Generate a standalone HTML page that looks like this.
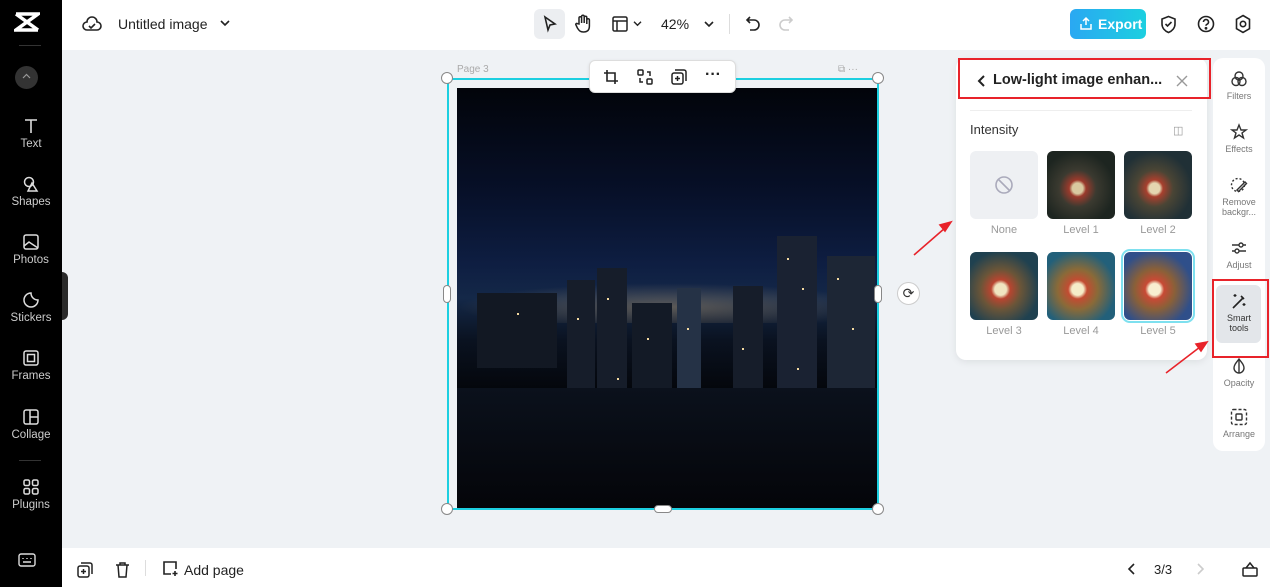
<!DOCTYPE html>
<html><head><meta charset="utf-8"><style>
*{margin:0;padding:0;box-sizing:border-box}
body{width:1270px;height:587px;overflow:hidden;font-family:"Liberation Sans",sans-serif;background:#eff2f5;position:relative}
.abs{position:absolute}
.side{left:0;top:0;width:62px;height:587px;background:#000;color:#ddd}
.si{position:absolute;left:0;width:62px;text-align:center;font-size:11.5px;color:#ccc}
.si svg{display:block;margin:0 auto 3px}
.top{left:62px;top:0;width:1208px;height:50px;background:#fff}
.bot{left:62px;top:548px;width:1208px;height:39px;background:#fff}
.lbl{font-size:11px;color:#999;text-align:center;position:absolute;width:68px}
.th{position:absolute;width:68px;height:68px;border-radius:6px;overflow:hidden}
.rr{font-size:9px;color:#777;text-align:center;position:absolute;left:1213px;width:52px;line-height:10px}
.rr svg{display:block;margin:0 auto 3px}
.b{position:absolute;background:#161d2a}
.w{position:absolute;width:2px;height:2px;background:#f3d9a0}
</style></head><body>
<div class="abs side">
 <svg class="abs" style="left:14px;top:12px" width="26" height="20" viewBox="0 0 26 20"><path d="M2 2h22L2 18h22M2 2l22 16" stroke="#fff" stroke-width="3.5" fill="none"/></svg>
 <div class="abs" style="left:19px;top:45px;width:22px;height:1px;background:#333"></div>
 <div class="abs" style="left:15px;top:66px;width:23px;height:23px;border-radius:50%;background:#333"></div>
 <svg class="abs" style="left:22px;top:73px" width="9" height="6" viewBox="0 0 9 6"><path d="M1 5l3.5-3.5L8 5" stroke="#999" stroke-width="1.2" fill="none"/></svg>
 <div class="si" style="top:117px"><svg width="18" height="18" viewBox="0 0 18 18"><path d="M3 3h12M9 3v13" stroke="#ddd" stroke-width="1.6" fill="none"/></svg>Text</div>
 <div class="si" style="top:175px"><svg width="18" height="18" viewBox="0 0 18 18" fill="none" stroke="#ddd" stroke-width="1.5"><circle cx="7" cy="7" r="4.5"/><path d="M10 8l5 8H6z"/></svg>Shapes</div>
 <div class="si" style="top:233px"><svg width="18" height="18" viewBox="0 0 18 18" fill="none" stroke="#ddd" stroke-width="1.5"><rect x="2" y="2" width="14" height="14" rx="2"/><path d="M2 13l5-4 9 6"/></svg>Photos</div>
 <div class="si" style="top:291px"><svg width="18" height="18" viewBox="0 0 18 18" fill="none" stroke="#ddd" stroke-width="1.5"><path d="M9 2a7 7 0 1 0 7 7c-4 0-7-3-7-7z"/></svg>Stickers</div>
 <div class="si" style="top:349px"><svg width="18" height="18" viewBox="0 0 18 18" fill="none" stroke="#ddd" stroke-width="1.5"><rect x="2" y="2" width="14" height="14" rx="2"/><rect x="5.5" y="5.5" width="7" height="7"/></svg>Frames</div>
 <div class="si" style="top:408px"><svg width="18" height="18" viewBox="0 0 18 18" fill="none" stroke="#ddd" stroke-width="1.5"><rect x="2" y="2" width="14" height="14" rx="2"/><path d="M8 2v14M8 9h8"/></svg>Collage</div>
 <div class="abs" style="left:19px;top:460px;width:22px;height:1px;background:#333"></div>
 <div class="si" style="top:478px"><svg width="18" height="18" viewBox="0 0 18 18" fill="none" stroke="#ddd" stroke-width="1.5"><rect x="2" y="2" width="5.5" height="5.5" rx="1.5"/><rect x="10.5" y="2" width="5.5" height="5.5" rx="1.5"/><rect x="2" y="10.5" width="5.5" height="5.5" rx="1.5"/><rect x="10.5" y="10.5" width="5.5" height="5.5" rx="1.5"/></svg>Plugins</div>
 <svg class="abs" style="left:18px;top:553px" width="18" height="14" viewBox="0 0 18 14" fill="none" stroke="#ddd" stroke-width="1.4"><rect x="1" y="1" width="16" height="12" rx="2"/><path d="M5 5v1M9 5v1M13 5v1M5 9h8"/></svg>
</div>
<div class="abs" style="left:62px;top:272px;width:6px;height:48px;background:#2a2a2a;border-radius:0 6px 6px 0"></div>
<div class="abs top">
 <svg class="abs" style="left:20px;top:15px" width="20" height="18" viewBox="0 0 20 18" fill="none" stroke="#222" stroke-width="1.6"><path d="M5 15a4 4 0 0 1 0-8 5 5 0 0 1 10 0 4 4 0 0 1 0 8z"/><path d="M7 11l2 2 4-4"/></svg>
 <div class="abs" style="left:56px;top:16px;font-size:14px;color:#222">Untitled image</div>
 <svg class="abs" style="left:158px;top:19px" width="10" height="8" viewBox="0 0 10 8"><path d="M1 2l4 4 4-4" stroke="#222" stroke-width="1.6" fill="none"/></svg>
 <div class="abs" style="left:472px;top:9px;width:31px;height:30px;background:#eceef1;border-radius:6px"></div>
 <svg class="abs" style="left:480px;top:15px" width="16" height="18" viewBox="0 0 16 18"><path d="M3 2l10 7-5 1-2 5z" stroke="#222" stroke-width="1.6" fill="none"/></svg>
 <svg class="abs" style="left:512px;top:14px" width="18" height="20" viewBox="0 0 18 20" fill="none" stroke="#222" stroke-width="1.5"><path d="M5 10V4a1.3 1.3 0 0 1 2.6 0v5V2.5a1.3 1.3 0 0 1 2.6 0V9V3.5a1.3 1.3 0 0 1 2.6 0V10V6a1.3 1.3 0 0 1 2.6 0v6c0 4-2 6-6 6-3 0-4-1-6-4L2 11c-.7-1 .5-2 1.5-1.3z"/></svg>
 <svg class="abs" style="left:550px;top:16px" width="16" height="16" viewBox="0 0 16 16" fill="none" stroke="#222" stroke-width="1.5"><rect x="1" y="1" width="14" height="14" rx="1.5"/><path d="M1 5h14M5 5v10"/></svg>
 <svg class="abs" style="left:571px;top:20px" width="9" height="7" viewBox="0 0 10 8"><path d="M1 2l4 4 4-4" stroke="#222" stroke-width="1.6" fill="none"/></svg>
 <div class="abs" style="left:599px;top:16px;font-size:14px;color:#222">42%</div>
 <svg class="abs" style="left:642px;top:20px" width="10" height="8" viewBox="0 0 10 8"><path d="M1 2l4 4 4-4" stroke="#222" stroke-width="1.6" fill="none"/></svg>
 <div class="abs" style="left:667px;top:14px;width:1px;height:20px;background:#ddd"></div>
 <svg class="abs" style="left:683px;top:15px" width="16" height="17" viewBox="0 0 16 17" fill="none" stroke="#222" stroke-width="1.6"><path d="M5 2L2 5l3 3M2 5h7a5 5 0 0 1 0 10H5"/></svg>
 <svg class="abs" style="left:716px;top:15px" width="16" height="17" viewBox="0 0 16 17" fill="none" stroke="#ccc" stroke-width="1.6"><path d="M11 2l3 3-3 3M14 5H7a5 5 0 0 0 0 10h4"/></svg>
 <div class="abs" style="left:1008px;top:9px;width:76px;height:30px;border-radius:6px;background:linear-gradient(90deg,#2aa8f2,#1ccfe0);color:#fff;font-size:14px;font-weight:bold;padding:7px 0 0 28px">Export</div>
 <svg class="abs" style="left:1017px;top:16px" width="14" height="15" viewBox="0 0 14 15" fill="none" stroke="#fff" stroke-width="1.5"><path d="M7 9V2M4 5l3-3 3 3M2 8v5h10V8"/></svg>
 <svg class="abs" style="left:1098px;top:15px" width="17" height="19" viewBox="0 0 17 19" fill="none" stroke="#222" stroke-width="1.6"><path d="M8.5 1.5L15 4v5c0 4-3 7-6.5 8.5C5 16 2 13 2 9V4z"/><path d="M5.5 9l2 2 4-4"/></svg>
 <svg class="abs" style="left:1135px;top:15px" width="18" height="18" viewBox="0 0 18 18" fill="none" stroke="#222" stroke-width="1.6"><circle cx="9" cy="9" r="7.5"/><path d="M6.5 7a2.5 2.5 0 1 1 3.5 2.3c-.7.3-1 .8-1 1.5"/><circle cx="9" cy="13.3" r=".6" fill="#222"/></svg>
 <svg class="abs" style="left:1172px;top:14px" width="18" height="20" viewBox="0 0 18 20" fill="none" stroke="#222" stroke-width="1.6"><path d="M9 1.5l6.5 3.8v9.4L9 18.5l-6.5-3.8V5.3z"/><circle cx="9" cy="10" r="2.7"/></svg>
</div>
<div class="abs" style="left:457px;top:64px;font-size:10px;color:#aaa">Page 3</div>
<div class="abs" style="left:838px;top:64px;font-size:10px;color:#aaa">⧉ ···</div>
<div class="abs" style="left:457px;top:88px;width:421px;height:421px;overflow:hidden;background:linear-gradient(180deg,#02040a 0%,#071029 25%,#0e1e42 42%,#142848 50%,#0a1220 60%,#04060b 72%,#05070b 100%)">
 <div class="abs" style="left:0;top:195px;width:421px;height:40px;background:radial-gradient(ellipse at 50% 60%,rgba(230,190,130,.35),rgba(0,0,0,0) 70%)"></div>
 <div class="b" style="left:320px;top:148px;width:40px;height:185px;background:#1a2232"></div>
 <div class="b" style="left:370px;top:168px;width:48px;height:170px;background:#1d2635"></div>
 <div class="b" style="left:276px;top:198px;width:30px;height:130px"></div>
 <div class="b" style="left:220px;top:200px;width:24px;height:115px;background:#253246"></div>
 <div class="b" style="left:140px;top:180px;width:30px;height:130px"></div>
 <div class="b" style="left:110px;top:192px;width:28px;height:118px"></div>
 <div class="b" style="left:175px;top:215px;width:40px;height:90px;background:#131a26"></div>
 <div class="b" style="left:20px;top:205px;width:80px;height:75px;background:#121823"></div>
 <div class="abs" style="left:0;top:300px;width:421px;height:121px;background:linear-gradient(180deg,#0b111c,#040509)"></div>
 <div class="w" style="left:330px;top:170px"></div><div class="w" style="left:345px;top:200px"></div><div class="w" style="left:380px;top:190px"></div><div class="w" style="left:395px;top:240px"></div><div class="w" style="left:150px;top:210px"></div><div class="w" style="left:120px;top:230px"></div><div class="w" style="left:230px;top:240px"></div><div class="w" style="left:285px;top:260px"></div><div class="w" style="left:60px;top:225px"></div><div class="w" style="left:190px;top:250px"></div><div class="w" style="left:340px;top:280px"></div><div class="w" style="left:160px;top:290px"></div>
</div>
<div class="abs" style="left:447px;top:78px;width:432px;height:432px;border:2px solid #1ccfe0"></div>
<div class="abs" style="left:441px;top:72px;width:12px;height:12px;border-radius:50%;background:#fff;border:1px solid #888"></div>
<div class="abs" style="left:872px;top:72px;width:12px;height:12px;border-radius:50%;background:#fff;border:1px solid #888"></div>
<div class="abs" style="left:441px;top:503px;width:12px;height:12px;border-radius:50%;background:#fff;border:1px solid #888"></div>
<div class="abs" style="left:872px;top:503px;width:12px;height:12px;border-radius:50%;background:#fff;border:1px solid #888"></div>
<div class="abs" style="left:443px;top:285px;width:8px;height:18px;border-radius:4px;background:#fff;border:1px solid #888"></div>
<div class="abs" style="left:874px;top:285px;width:8px;height:18px;border-radius:4px;background:#fff;border:1px solid #888"></div>
<div class="abs" style="left:654px;top:505px;width:18px;height:8px;border-radius:4px;background:#fff;border:1px solid #888"></div>
<div class="abs" style="left:897px;top:282px;width:23px;height:23px;border-radius:50%;background:#fff;border:1px solid #ccc;font-size:14px;text-align:center;line-height:21px;color:#333">⟳</div>
<div class="abs" style="left:589px;top:60px;width:147px;height:33px;background:#fff;border:1px solid #ddd;border-radius:6px;box-shadow:0 1px 3px rgba(0,0,0,.1)">
 <svg class="abs" style="left:13px;top:8px" width="16" height="16" viewBox="0 0 16 16" fill="none" stroke="#222" stroke-width="1.6"><path d="M4 1v11h11M1 4h11v11"/></svg>
 <svg class="abs" style="left:47px;top:8px" width="16" height="16" viewBox="0 0 16 16" fill="none" stroke="#222" stroke-width="1.5"><rect x="1" y="1" width="5" height="5" rx="1"/><rect x="10" y="10" width="5" height="5" rx="1"/><path d="M10 3h3v4M6 13H3V9"/></svg>
 <svg class="abs" style="left:81px;top:8px" width="16" height="16" viewBox="0 0 16 16" fill="none" stroke="#222" stroke-width="1.5"><rect x="1" y="4" width="11" height="11" rx="2"/><path d="M4 1h9a2 2 0 0 1 2 2v9M6.5 7v5M4 9.5h5"/></svg>
 <div class="abs" style="left:115px;top:5px;font-size:16px;font-weight:bold;color:#222">···</div>
</div>
<div class="abs" style="left:956px;top:58px;width:251px;height:302px;background:#fff;border-radius:10px;box-shadow:0 2px 8px rgba(0,0,0,.08)">
 <div class="abs" style="left:14px;top:52px;width:222px;height:1px;background:#eee"></div>
 <div class="abs" style="left:14px;top:64px;font-size:13px;color:#333">Intensity</div>
 <div class="abs" style="left:217px;top:66px;font-size:11px;color:#999">◫</div>
</div>
<div class="abs" style="left:958px;top:58px;width:253px;height:41px;border:2.5px solid #e8232a"></div>
<svg class="abs" style="left:976px;top:74px" width="10" height="14" viewBox="0 0 10 14"><path d="M8 2L3 7l5 5" stroke="#222" stroke-width="2" fill="none"/></svg>
<div class="abs" style="left:993px;top:72px;font-size:14.5px;font-weight:bold;color:#222">Low-light image enhan...</div>
<svg class="abs" style="left:1175px;top:74px" width="14" height="14" viewBox="0 0 14 14"><path d="M2 2l10 10M12 2L2 12" stroke="#999" stroke-width="1.4"/></svg>
<div class="th" style="left:970px;top:151px;background:#eef0f3"><svg class="abs" style="left:24px;top:24px" width="20" height="20" viewBox="0 0 20 20" fill="none" stroke="#aab" stroke-width="1.6"><circle cx="10" cy="10" r="8"/><path d="M4.5 4.5l11 11"/></svg></div>
<div class="th" style="left:1047px;top:151px;background:radial-gradient(circle at 45% 55%,#d9c9a0 0 10%,#9b3a2c 16%,#3b3a30 35%,#1d2520 70%)"></div>
<div class="th" style="left:1124px;top:151px;background:radial-gradient(circle at 45% 55%,#e4d6b0 0 10%,#a8402e 16%,#4a4535 35%,#203036 70%)"></div>
<div class="th" style="left:970px;top:252px;background:radial-gradient(circle at 45% 55%,#f0e5c0 0 11%,#b84530 18%,#6a5538 38%,#1f4150 72%)"></div>
<div class="th" style="left:1047px;top:252px;background:radial-gradient(circle at 45% 55%,#f5ecc8 0 11%,#c24c32 18%,#8a6a38 38%,#22607a 72%)"></div>
<div class="th" style="left:1124px;top:252px;background:radial-gradient(circle at 45% 55%,#f8eed0 0 11%,#c84a35 18%,#8a6038 38%,#2f4f8a 72%);outline:2px solid #7ee0ef;outline-offset:1px"></div>
<div class="lbl" style="left:970px;top:224px">None</div>
<div class="lbl" style="left:1047px;top:224px">Level 1</div>
<div class="lbl" style="left:1124px;top:224px">Level 2</div>
<div class="lbl" style="left:970px;top:325px">Level 3</div>
<div class="lbl" style="left:1047px;top:325px">Level 4</div>
<div class="lbl" style="left:1124px;top:325px">Level 5</div>
<div class="abs" style="left:1213px;top:58px;width:52px;height:393px;background:#fff;border-radius:10px"></div>
<div class="abs" style="left:1216px;top:285px;width:45px;height:58px;background:#e3e6ea;border-radius:6px"></div>
<div class="abs" style="left:1212px;top:279px;width:57px;height:79px;border:2.5px solid #e8232a"></div>
<div class="rr" style="top:70px"><svg width="18" height="18" viewBox="0 0 18 18" fill="none" stroke="#333" stroke-width="1.4"><circle cx="9" cy="6" r="4"/><circle cx="6" cy="11.5" r="4"/><circle cx="12" cy="11.5" r="4"/></svg>Filters</div>
<div class="rr" style="top:123px"><svg width="18" height="18" viewBox="0 0 18 18" fill="none" stroke="#333" stroke-width="1.4"><path d="M9 2l2 5h5l-4 3 1.5 5L9 12l-4.5 3L6 10 2 7h5z"/></svg>Effects</div>
<div class="rr" style="top:176px"><svg width="18" height="18" viewBox="0 0 18 18" fill="none" stroke="#333" stroke-width="1.4"><circle cx="8" cy="9" r="6.5" stroke-dasharray="2 2"/><path d="M7 14l8-8 1.5 1.5-8 8z"/></svg>Remove<br>backgr...</div>
<div class="rr" style="top:239px"><svg width="18" height="18" viewBox="0 0 18 18" fill="none" stroke="#333" stroke-width="1.4"><path d="M2 6h14M2 12h14"/><circle cx="11" cy="6" r="2" fill="#fff"/><circle cx="7" cy="12" r="2" fill="#fff"/></svg>Adjust</div>
<div class="rr" style="top:292px;color:#333"><svg width="18" height="18" viewBox="0 0 18 18" fill="none" stroke="#222" stroke-width="1.6"><path d="M3 16L13 6M11 4l3 3"/><path d="M5 2v3M3.5 3.5h3M14 11v3M12.5 12.5h3" stroke-width="1.2"/></svg>Smart<br>tools</div>
<div class="rr" style="top:357px"><svg width="18" height="18" viewBox="0 0 18 18" fill="none" stroke="#333" stroke-width="1.4"><path d="M9 2c3 4 5 6 5 9a5 5 0 0 1-10 0c0-3 2-5 5-9z"/><path d="M9 3v13" /></svg>Opacity</div>
<div class="rr" style="top:408px"><svg width="18" height="18" viewBox="0 0 18 18" fill="none" stroke="#333" stroke-width="1.4"><rect x="1.5" y="1.5" width="15" height="15" rx="2" stroke-dasharray="3 2"/><rect x="6" y="6" width="6" height="6" rx="1"/></svg>Arrange</div>
<svg class="abs" style="left:0;top:0" width="1270" height="587"><g stroke="#e8232a" stroke-width="1.6" fill="#e8232a"><line x1="914" y1="255" x2="945" y2="228"/><path d="M951 222l-11 3 5 6z"/><line x1="1166" y1="373" x2="1200" y2="347"/><path d="M1207 342l-11 2 5 7z"/></g></svg>
<div class="abs bot">
 <svg class="abs" style="left:15px;top:14px" width="16" height="16" viewBox="0 0 16 16" fill="none" stroke="#222" stroke-width="1.5"><rect x="1" y="4" width="11" height="11" rx="2"/><path d="M4 1h9a2 2 0 0 1 2 2v9M6.5 7v5M4 9.5h5"/></svg>
 <svg class="abs" style="left:53px;top:14px" width="15" height="16" viewBox="0 0 15 16" fill="none" stroke="#222" stroke-width="1.5"><path d="M1 3h13M5 3V1h5v2M3 3l1 12h7l1-12"/></svg>
 <div class="abs" style="left:83px;top:12px;width:1px;height:16px;background:#ddd"></div>
 <svg class="abs" style="left:100px;top:12px" width="17" height="17" viewBox="0 0 17 17" fill="none" stroke="#222" stroke-width="1.6"><path d="M9 14H2V2h12v7M13 11v5M10.5 13.5h5"/></svg>
 <div class="abs" style="left:122px;top:14px;font-size:14px;color:#222">Add page</div>
 <svg class="abs" style="left:1064px;top:14px" width="10" height="14" viewBox="0 0 10 14"><path d="M8 2L3 7l5 5" stroke="#222" stroke-width="1.6" fill="none"/></svg>
 <div class="abs" style="left:1092px;top:14px;font-size:13px;color:#222">3/3</div>
 <svg class="abs" style="left:1134px;top:14px" width="10" height="14" viewBox="0 0 10 14"><path d="M2 2l5 5-5 5" stroke="#ccc" stroke-width="1.6" fill="none"/></svg>
 <svg class="abs" style="left:1180px;top:13px" width="16" height="16" viewBox="0 0 16 16" fill="none" stroke="#222" stroke-width="1.5"><rect x="1" y="7" width="14" height="8" rx="1"/><path d="M4 7l4-5 4 5"/></svg>
</div>
</body></html>
